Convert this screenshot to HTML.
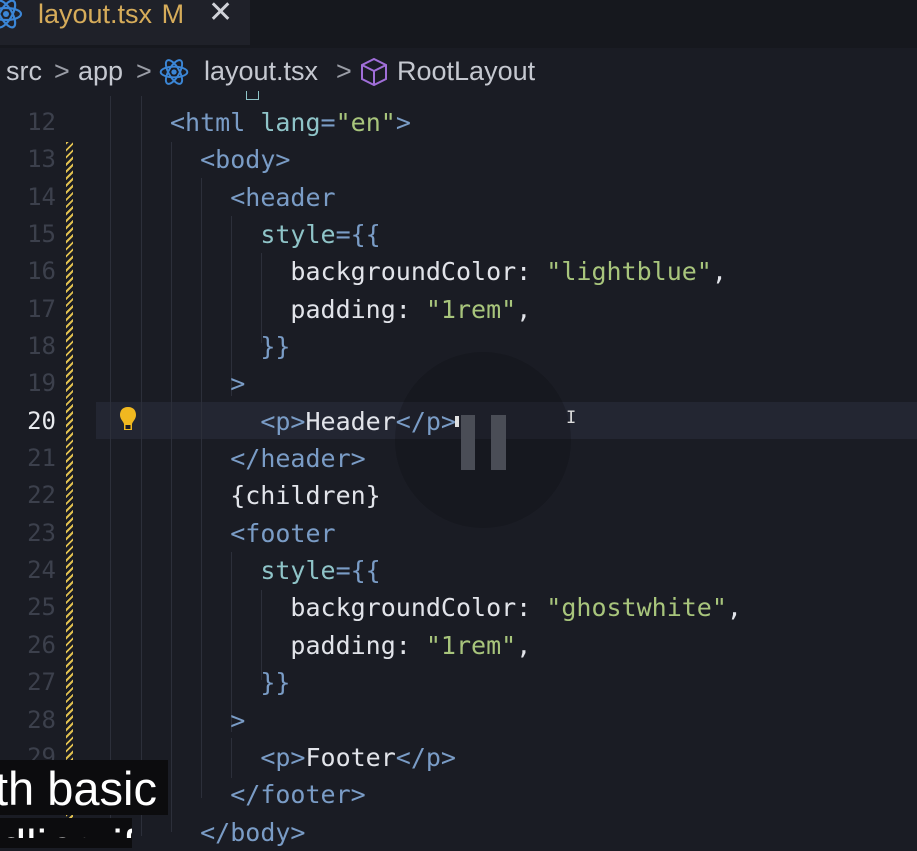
<!DOCTYPE html>
<html><head><meta charset="utf-8"><style>
body{margin:0;width:917px;height:836px;overflow:hidden;background:#1a1c24;position:relative;font-family:"DejaVu Sans Mono","Liberation Mono",monospace}
.tabbar{position:absolute;left:0;top:0;width:917px;height:48px;background:#16181e}
.tab{position:absolute;left:0;top:0;width:250px;height:45px;background:#1f2129}
.crumbs{position:absolute;left:0;top:48px;width:917px;height:48px;background:#1a1c24;font-family:"Liberation Sans",sans-serif;font-size:27px;color:#c5c8d0}
.ln{position:absolute;left:0;width:56px;text-align:right;font-size:24px;color:#3c404c;line-height:37.35px}
.code{position:absolute;left:0;font-size:25px;white-space:pre;line-height:37.35px;color:#e2e4ea}
.t{color:#7a9cc6}.a{color:#8fc4c8}.s{color:#a8c57c}.p{color:#7a9cc6}
.g{position:absolute;width:1px;background:#2c2f3a}
</style></head><body>
<div class="tabbar"><div class="tab"></div></div>
<svg style="position:absolute;left:-12px;top:0" width="36" height="30" viewBox="0 0 36 30"><g fill="none" stroke="#3b86d6" stroke-width="2.2"><ellipse cx="18" cy="14" rx="15" ry="6"/><ellipse cx="18" cy="14" rx="15" ry="6" transform="rotate(60 18 14)"/><ellipse cx="18" cy="14" rx="15" ry="6" transform="rotate(-60 18 14)"/></g><circle cx="18" cy="14" r="3" fill="#3b86d6"/></svg>
<div style="position:absolute;left:38px;top:-1px;font-family:'Liberation Sans',sans-serif;font-size:27px;color:#d6ac5a;line-height:30px">layout.tsx <span style="margin-left:2px">M</span></div>
<div style="position:absolute;left:208px;top:-2px;font-family:'Liberation Sans',sans-serif;font-size:30px;color:#d0d2d8;line-height:30px">✕</div>
<div class="crumbs">
<span style="position:absolute;left:6px;top:8px">src</span>
<span style="position:absolute;left:54px;top:8px;color:#9a9da6">&gt;</span>
<span style="position:absolute;left:78px;top:8px">app</span>
<span style="position:absolute;left:136px;top:8px;color:#9a9da6">&gt;</span>
<svg style="position:absolute;left:158px;top:9px" width="32" height="30" viewBox="0 0 36 30"><g fill="none" stroke="#3b86d6" stroke-width="2.2"><ellipse cx="18" cy="15" rx="15" ry="6"/><ellipse cx="18" cy="15" rx="15" ry="6" transform="rotate(60 18 15)"/><ellipse cx="18" cy="15" rx="15" ry="6" transform="rotate(-60 18 15)"/></g><circle cx="18" cy="15" r="3" fill="#3b86d6"/></svg>
<span style="position:absolute;left:204px;top:8px">layout.tsx</span>
<span style="position:absolute;left:336px;top:8px;color:#9a9da6">&gt;</span>
<svg style="position:absolute;left:360px;top:9px" width="28" height="30" viewBox="0 0 28 30"><g fill="none" stroke="#a06ed8" stroke-width="2"><path d="M14 2 L26 8 L26 22 L14 28 L2 22 L2 8 Z M2 8 L14 14 L26 8 M14 14 L14 28"/></g></svg>
<span style="position:absolute;left:397px;top:8px">RootLayout</span>
</div>
<div style="position:absolute;left:96px;top:402px;width:821px;height:37px;background:#232632"></div>
<div style="position:absolute;left:395px;top:352px;width:176px;height:176px;border-radius:50%;background:rgba(10,12,16,0.25)"></div>
<div style="position:absolute;left:66px;top:142px;width:7px;height:700px;background:repeating-linear-gradient(135deg,#e0c050 0 2px,#1a1c24 2px 5px)"></div>
<div class="g" style="left:110px;top:96px;height:740px"></div>
<div class="g" style="left:141px;top:96px;height:740px"></div>
<div class="g" style="left:171px;top:142px;height:690px"></div>
<div class="g" style="left:201px;top:178px;height:620px"></div>
<div class="g" style="left:231px;top:216px;height:180px"></div>
<div class="g" style="left:261px;top:253px;height:90px"></div>
<div class="g" style="left:231px;top:552px;height:180px"></div>
<div class="g" style="left:261px;top:590px;height:90px"></div>
<div class="g" style="left:231px;top:738px;height:40px"></div>
<div style="position:absolute;left:246px;top:91px;width:11px;height:8px;border:1.5px solid #8fc4c8;border-top:none"></div>
<div class="ln" style="top:104px">12<br>13<br>14<br>15<br>16<br>17<br>18<br>19<br><span style="color:#e8eaee">20</span><br>21<br>22<br>23<br>24<br>25<br>26<br>27<br>28<br>29<br>30<br>31</div>
<div class="code" style="left:170px;top:104px"><span class="t">&lt;html</span> <span class="a">lang</span><span class="p">=</span><span class="s">"en"</span><span class="t">&gt;</span>
  <span class="t">&lt;body&gt;</span>
    <span class="t">&lt;header</span>
      <span class="a">style</span><span class="p">={{</span>
        backgroundColor: <span class="s">"lightblue"</span>,
        padding: <span class="s">"1rem"</span>,
      <span class="p">}}</span>
    <span class="t">&gt;</span>
      <span class="t">&lt;p&gt;</span>Header<span class="t">&lt;/p&gt;</span>
    <span class="t">&lt;/header&gt;</span>
    {children}
    <span class="t">&lt;footer</span>
      <span class="a">style</span><span class="p">={{</span>
        backgroundColor: <span class="s">"ghostwhite"</span>,
        padding: <span class="s">"1rem"</span>,
      <span class="p">}}</span>
    <span class="t">&gt;</span>
      <span class="t">&lt;p&gt;</span>Footer<span class="t">&lt;/p&gt;</span>
    <span class="t">&lt;/footer&gt;</span>
  <span class="t">&lt;/body&gt;</span></div>
<div style="position:absolute;left:455px;top:416px;width:4px;height:11px;background:#e0e0e0"></div>
<svg style="position:absolute;left:119px;top:406px" width="18" height="28" viewBox="0 0 18 28"><path d="M9 1 C3 1 1 5 1 9 C1 13 4 15 5 18 L5 24 L13 24 L13 18 C14 15 17 13 17 9 C17 5 15 1 9 1Z" fill="#f0b820"/><rect x="6.5" y="19" width="5" height="4" fill="#1a1c24"/></svg>
<div style="position:absolute;left:461px;top:415px;width:14px;height:55px;background:#4a4d56"></div>
<div style="position:absolute;left:491px;top:415px;width:15px;height:55px;background:#4a4d56"></div>
<div style="position:absolute;left:566px;top:408px;font-size:17px;color:#ddd">I</div>
<div style="position:absolute;left:0;top:760px;width:168px;height:55px;background:#0c0c0e"></div>
<div style="position:absolute;left:0;top:818px;width:132px;height:30px;background:#0c0c0e"></div>
<div style="position:absolute;left:0;top:760px;width:168px;height:55px;overflow:hidden;font-family:'Liberation Sans',sans-serif;font-size:47px;color:#fff;line-height:58px;white-space:nowrap;text-indent:-5px">th basic</div>
<div style="position:absolute;left:0;top:818px;width:132px;height:20px;overflow:hidden;font-family:'Liberation Sans',sans-serif;font-size:47px;color:#fff;line-height:58px;white-space:nowrap">dling if</div>
</body></html>
